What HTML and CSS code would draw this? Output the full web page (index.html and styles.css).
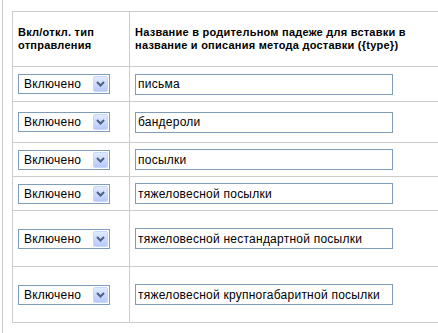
FILE: index.html
```html
<!DOCTYPE html>
<html lang="ru">
<head>
  <meta charset="UTF-8">
  <title>Типы отправлений</title>
  <link rel="stylesheet" href="styles.css">
</head>
<body>
  <div class="page">
    <table class="types">
      <tr class="head">
        <th class="col-state">Вкл/откл. тип отправления</th>
        <th class="col-name">Название в родительном падеже для вставки в название и описания метода доставки ({type})</th>
      </tr>
      <tr class="h35">
        <td><div class="select"><select><option>Включено</option><option>Выключено</option></select><span class="arrow"><svg width="9" height="6" viewBox="0 0 9 6"><path d="M1 1l3.5 3.5L8 1" fill="none" stroke="#4d6185" stroke-width="2"/></svg></span></div></td>
        <td><input class="text" type="text" value="письма"></td>
      </tr>
      <tr class="h41">
        <td><div class="select"><select><option>Включено</option><option>Выключено</option></select><span class="arrow"><svg width="9" height="6" viewBox="0 0 9 6"><path d="M1 1l3.5 3.5L8 1" fill="none" stroke="#4d6185" stroke-width="2"/></svg></span></div></td>
        <td><input class="text" type="text" value="бандероли"></td>
      </tr>
      <tr class="h34">
        <td><div class="select"><select><option>Включено</option><option>Выключено</option></select><span class="arrow"><svg width="9" height="6" viewBox="0 0 9 6"><path d="M1 1l3.5 3.5L8 1" fill="none" stroke="#4d6185" stroke-width="2"/></svg></span></div></td>
        <td><input class="text" type="text" value="посылки"></td>
      </tr>
      <tr class="h34">
        <td><div class="select"><select><option>Включено</option><option>Выключено</option></select><span class="arrow"><svg width="9" height="6" viewBox="0 0 9 6"><path d="M1 1l3.5 3.5L8 1" fill="none" stroke="#4d6185" stroke-width="2"/></svg></span></div></td>
        <td><input class="text" type="text" value="тяжеловесной посылки"></td>
      </tr>
      <tr class="h56">
        <td><div class="select"><select><option>Включено</option><option>Выключено</option></select><span class="arrow"><svg width="9" height="6" viewBox="0 0 9 6"><path d="M1 1l3.5 3.5L8 1" fill="none" stroke="#4d6185" stroke-width="2"/></svg></span></div></td>
        <td><input class="text" type="text" value="тяжеловесной нестандартной посылки"></td>
      </tr>
      <tr class="h56">
        <td><div class="select"><select><option>Включено</option><option>Выключено</option></select><span class="arrow"><svg width="9" height="6" viewBox="0 0 9 6"><path d="M1 1l3.5 3.5L8 1" fill="none" stroke="#4d6185" stroke-width="2"/></svg></span></div></td>
        <td><input class="text" type="text" value="тяжеловесной крупногабаритной посылки"></td>
      </tr>
    </table>
  </div>
</body>
</html>
```

FILE: styles.css
```css
body {
  margin: 0;
  overflow: hidden;
  background: #fff;
  color: #000;
  font-family: 'Liberation Sans', Arial, sans-serif;
  font-size: 12px;
  letter-spacing: 0.24px;
}

.page {
  margin-left: 2px;
  border-left: 1px solid #ccc;
  padding: 11px 0 0 9px;
  min-height: 100vh;
  box-sizing: border-box;
}

.types {
  border-collapse: collapse;
  width: 440px;
}

.types th,
.types td {
  border: 1px solid #ccc;
  padding: 0 5px;
  text-align: left;
  vertical-align: middle;
}

.types th {
  font-size: 11px;
  font-weight: bold;
  line-height: 13px;
  height: 54px;
}

.col-state {
  width: 106px;
}

.h34 td { height: 33px; }
.h35 td { height: 34px; }
.h41 td { height: 40px; }
.h56 td { height: 55px; }

.select {
  position: relative;
  width: 92px;
  height: 20px;
}

.select select {
  appearance: none;
  -webkit-appearance: none;
  width: 92px;
  height: 20px;
  margin: 0;
  padding: 0 0 0 5px;
  border: 1px solid #7f9db9;
  border-radius: 0;
  background: #fff;
  font-family: inherit;
  font-size: 12px;
  letter-spacing: inherit;
  color: #000;
}

.arrow {
  position: absolute;
  top: 2px;
  right: 2px;
  width: 15px;
  height: 16px;
  box-sizing: border-box;
  border: 1px solid #c7d6fb;
  border-radius: 2px;
  background: linear-gradient(#e1eafe, #b6cafa);
  display: flex;
  align-items: center;
  justify-content: center;
}

.text {
  box-sizing: border-box;
  width: 258px;
  height: 21px;
  margin: 0;
  padding: 0 2px;
  border: 1px solid #7f9db9;
  font-family: inherit;
  font-size: 12px;
  letter-spacing: inherit;
  color: #000;
}
```
